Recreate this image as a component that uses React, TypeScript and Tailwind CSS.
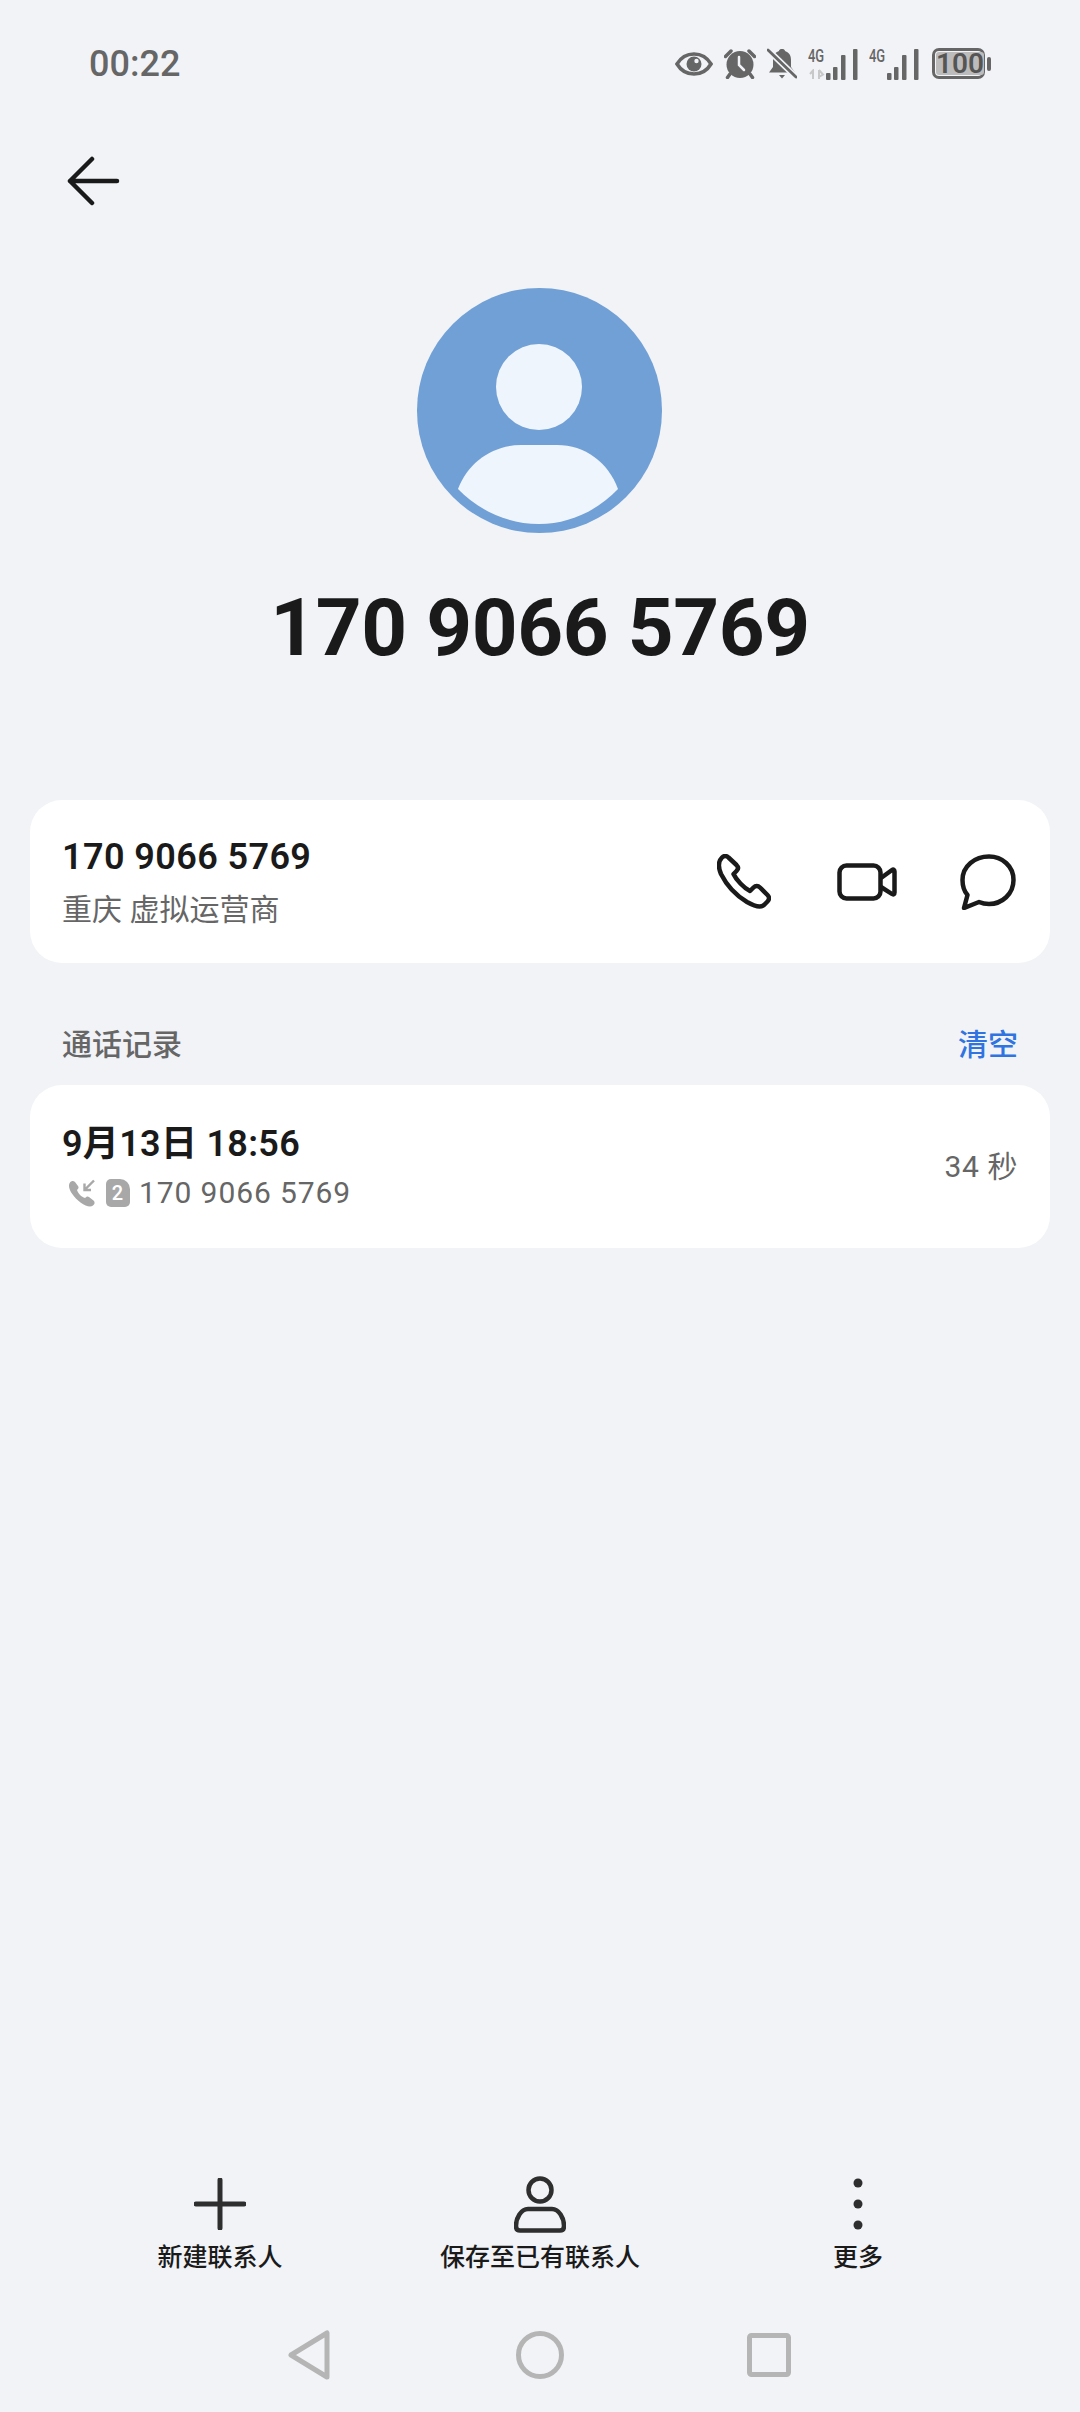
const FONT = 'font-[Roboto,"Noto_Sans_CJK_SC",sans-serif]';

function Eye() {
  return (
    <svg width="38" height="24" viewBox="0 0 38 24">
      <path d="M2 12C6.5 4.5 12 2 19 2S31.5 4.5 36 12C31.5 19.5 26 22 19 22S6.5 19.5 2 12Z" fill="none" stroke="#666" strokeWidth="3.6" />
      <circle cx="19" cy="12" r="7.5" fill="#666" />
      <circle cx="21.5" cy="9" r="2.2" fill="#f1f3f7" />
    </svg>
  );
}

function Alarm() {
  return (
    <svg width="32" height="30" viewBox="0 0 32 30">
      <circle cx="16" cy="15.5" r="13.5" fill="#666" />
      <path d="M1.5 7.5L7 2M30.5 7.5L25 2M6 25L3.5 28.5M26 25L28.5 28.5" stroke="#666" strokeWidth="3.5" strokeLinecap="round" />
      <path d="M15 8V16L20 21" fill="none" stroke="#f1f3f7" strokeWidth="2.5" strokeLinecap="round" />
    </svg>
  );
}

function BellOff() {
  return (
    <svg width="30" height="33" viewBox="0 0 30 33">
      <path d="M15 2C18 2 18 4 18 4C22.5 5.5 24 9 24 13V20L28 25.5H2L6 20V13C6 9 7.5 5.5 12 4C12 4 12 2 15 2Z" fill="#666" />
      <path d="M12 28H18L15 31.5Z" fill="#666" />
      <path d="M1 3L29 30" stroke="#f1f3f7" strokeWidth="6" />
      <path d="M1 3L29 30" stroke="#666" strokeWidth="2.8" strokeLinecap="round" />
    </svg>
  );
}

function Signal({ arrows }: { arrows?: boolean }) {
  return (
    <div className="flex items-end h-[32px]">
      <div className="flex flex-col h-[32px] w-[18px]">
        <span className="text-[18px] leading-[15px] font-medium text-[#666] scale-x-[0.72] origin-left">4G</span>
        {arrows && (
          <svg className="mt-auto" width="17" height="11" viewBox="0 0 17 11">
            <path d="M5 10V2M2 5L5 1.5V10M11 1V10M11 1L15 5.5L11 8" fill="none" stroke="#c8c8c8" strokeWidth="2" />
          </svg>
        )}
      </div>
      <svg width="32" height="31" viewBox="0 0 32 31" fill="#666">
        <rect x="0" y="24" width="4.5" height="7" rx="1" />
        <rect x="7" y="18" width="4.5" height="13" rx="1" />
        <rect x="15" y="6" width="4.5" height="25" rx="1" />
        <rect x="27" y="0" width="4.5" height="31" rx="1" />
      </svg>
    </div>
  );
}

function Battery() {
  return (
    <div className="flex items-center gap-[2px] ml-[2px]">
      <div className="w-[53px] h-[31px] rounded-[7px] border-[3px] border-[#666] p-[1px] flex">
        <div className="flex-1 rounded-[3px] bg-[#bcbcbc] flex items-center justify-center text-[28px] leading-none font-semibold text-[#555]">100</div>
      </div>
      <div className="w-[4px] h-[14px] rounded-[2px] bg-[#666]" />
    </div>
  );
}

function Avatar() {
  return (
    <svg width="245" height="245" viewBox="0 0 245 245">
      <circle cx="122.5" cy="122.5" r="122.5" fill="#70a0d5" />
      <circle cx="122" cy="99" r="43" fill="#eff5fc" />
      <path d="M41 201C51 174 76 157 104 157H140C168 157 191 174 201 201C180 223 152 236 122 236C92 236 62 223 41 201Z" fill="#eff5fc" />
    </svg>
  );
}

function PhoneIcon() {
  return (
    <svg width="54" height="55" viewBox="0 0 54 55" fill="none" stroke="#1a1a1a" strokeWidth="4.5" strokeLinejoin="round">
      <path d="M5 3.5C7 1.5 9.5 1.5 11.5 3.5L19.5 11C21.5 13 21.5 15 19.5 17L16.5 20C19 25.5 27 34 33 37L36.5 33.5C38.5 31.5 41 31.5 43 33.5L50.5 41C52.5 43 52.5 45.5 50.5 47.5L47 51C44 53.5 38 52.5 30 48C20 42 10 32 4 20C1 13 1.5 7 5 3.5Z" />
    </svg>
  );
}

function VideoIcon() {
  return (
    <svg width="60" height="38" viewBox="0 0 60 38" fill="none" stroke="#1a1a1a" strokeWidth="4.5" strokeLinejoin="round">
      <rect x="2.5" y="2.5" width="41" height="33" rx="7" />
      <path d="M44 15L55 7C56.5 6 57.5 7 57.5 8.5V29.5C57.5 31 56.5 32 55 31L44 24" />
    </svg>
  );
}

function ChatIcon() {
  return (
    <svg width="56" height="56" viewBox="0 0 56 56" fill="none" stroke="#1a1a1a" strokeWidth="4.5" strokeLinejoin="round">
      <path d="M29 2.5C42 2.5 53.5 12 53.5 26S42 50 29 50C25 50 22 49.3 19 48L4 54L7.5 41C4 37 2.5 32 2.5 26C2.5 12 15 2.5 29 2.5Z" />
    </svg>
  );
}

function IncomingCall() {
  return (
    <svg width="28" height="28" viewBox="0 0 28 28">
      <path d="M2 3.5C3.5 1.5 5.5 1.5 7 3L10 7C11 8.5 10.5 9.5 9 11C10 14.5 13.5 18 17 19C18.5 17.5 19.5 17 21 18L25.5 21.5C27 23 27 25 25 26.5C22.5 28.5 18 27.5 12.5 23.5C6 18.5 1 11.5 1 7C1 5.5 1.3 4.5 2 3.5Z" fill="#a8a8a8" />
      <path d="M26 1.5L16.5 11M16.5 4.5V11H23" fill="none" stroke="#a8a8a8" strokeWidth="2.4" />
    </svg>
  );
}

function BottomAction({ label, icon }: { label: string; icon: React.ReactNode }) {
  return (
    <div className="flex flex-col items-center">
      <div className="h-[58px] flex items-center justify-center">{icon}</div>
      <div className="mt-[11px] text-[25px] leading-[28px] font-medium text-[#1a1a1a] whitespace-nowrap">{label}</div>
    </div>
  );
}

export default function App() {
  return (
    <div className={`${FONT} w-[1080px] min-h-[2412px] bg-[#f1f3f7] flex flex-col`}>
      {/* status bar */}
      <div className="pt-[41px] pl-[89px] pr-[89px] h-[86px] flex items-center justify-between">
        <span className="text-[36px] leading-[44px] font-medium text-[#666]">00:22</span>
        <div className="flex items-center gap-[11px]">
          <Eye />
          <Alarm />
          <BellOff />
          <Signal arrows />
          <Signal />
          <Battery />
        </div>
      </div>

      <div className="pl-[66px] pt-[70px]">
        <svg className="block" width="54" height="50" viewBox="0 0 54 50" fill="none" stroke="#1a1a1a" strokeWidth="4.5" strokeLinecap="round" strokeLinejoin="round">
          <path d="M26 3L4 25L26 47M4 25H51" />
        </svg>
      </div>

      <div className="mt-[82px] flex justify-center pr-[2px]">
        <Avatar />
      </div>
      <h1 className="mt-[55px] text-center text-[80px] leading-[80px] font-bold text-[#1a1a1a] tracking-[-0.4px]">170 9066 5769</h1>

      <div className="mt-[132px] mx-[30px] h-[163px] rounded-[32px] bg-white flex items-center justify-between pl-[32px] pr-[34px]">
        <div>
          <div className="text-[36px] leading-[44px] font-semibold text-[#1a1a1a] tracking-[0.4px]">170 9066 5769</div>
          <div className="mt-[12px] text-[30px] leading-[38px] text-[#666]">重庆 虚拟运营商</div>
        </div>
        <div className="flex items-center gap-[63px]">
          <div className="mr-[3px]">
            <PhoneIcon />
          </div>
          <VideoIcon />
          <ChatIcon />
        </div>
      </div>

      <div className="mt-[62px] px-[32px] h-[60px] mx-[30px] flex items-start justify-between text-[30px] leading-[40px] font-medium">
        <span className="text-[#666]">通话记录</span>
        <span className="text-[#2f74e0]">清空</span>
      </div>

      <div className="mx-[30px] h-[163px] rounded-[32px] bg-white flex items-center justify-between pl-[32px] pr-[32px]">
        <div>
          <div className="text-[36px] leading-[44px] font-semibold text-[#1a1a1a] tracking-[0.3px]">9月13日 18:56</div>
          <div className="mt-[8px] flex items-center text-[30px] leading-[38px] text-[#666] tracking-[0.9px]">
            <span className="ml-[6px]">
              <IncomingCall />
            </span>
            <span className="ml-[10px] w-[24px] h-[28px] rounded-[5px] rounded-tr-[10px] bg-[#a8a8a8] flex items-center justify-center text-[20px] leading-none font-medium text-white">2</span>
            <span className="ml-[9px]">170 9066 5769</span>
          </div>
        </div>
        <span className="text-[30px] leading-[38px] text-[#666] tracking-[0.6px]">34 秒</span>
      </div>

      {/* bottom actions */}
      <div className="mt-auto px-[60px] grid grid-cols-[320px_320px_316px]">
        <BottomAction
          label="新建联系人"
          icon={
            <svg width="52" height="52" viewBox="0 0 52 52" stroke="#2e2e2e" strokeWidth="5" strokeLinecap="round">
              <path d="M26 2V50M2 26H50" />
            </svg>
          }
        />
        <BottomAction
          label="保存至已有联系人"
          icon={
            <svg width="52" height="57" viewBox="0 0 52 57" fill="none" stroke="#2e2e2e" strokeWidth="4.5" strokeLinejoin="round">
              <circle cx="26" cy="14" r="11.5" />
              <path d="M14 33H38C45 33 50 42 50 50C50 53 48.5 54.5 46 54.5H6C3.5 54.5 2 53 2 50C2 42 7 33 14 33Z" />
            </svg>
          }
        />
        <BottomAction
          label="更多"
          icon={
            <svg width="10" height="52" viewBox="0 0 10 52" fill="#2e2e2e">
              <circle cx="5" cy="5" r="4.5" />
              <circle cx="5" cy="26" r="4.5" />
              <circle cx="5" cy="47" r="4.5" />
            </svg>
          }
        />
      </div>

      {/* navigation bar */}
      <div className="mt-[58px] mb-[32px] pl-[288px] flex items-center">
        <svg width="42" height="50" viewBox="0 0 42 50" fill="none" stroke="#b5b5b5" strokeWidth="5" strokeLinejoin="round">
          <path d="M39 3V47L3 25Z" />
        </svg>
        <svg className="ml-[186px]" width="48" height="48" viewBox="0 0 48 48" fill="none" stroke="#b5b5b5" strokeWidth="5">
          <circle cx="24" cy="24" r="21.5" />
        </svg>
        <svg className="ml-[183px]" width="44" height="44" viewBox="0 0 44 44" fill="none" stroke="#b5b5b5" strokeWidth="5" strokeLinejoin="round">
          <rect x="2.5" y="2.5" width="39" height="39" rx="2" />
        </svg>
      </div>
    </div>
  );
}
